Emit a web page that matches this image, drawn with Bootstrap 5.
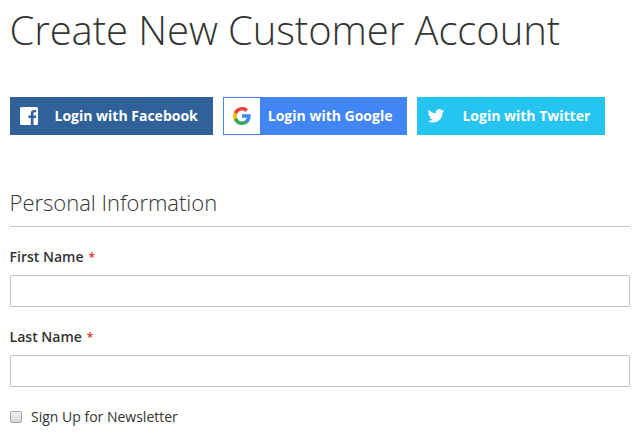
<!DOCTYPE html>
<html lang="en">
<head>
<meta charset="utf-8">
<meta name="viewport" content="width=device-width, initial-scale=1">
<title>Create New Customer Account</title>
<link href="https://cdn.jsdelivr.net/npm/bootstrap@5.3.0/dist/css/bootstrap.min.css" rel="stylesheet">
<style>
body { font-family: "Open Sans", "Noto Sans", sans-serif; font-size: 14px; line-height: 20px; color: #333; background: #fff; }
main { padding: 8px 10px 0; }
.page-title { font-size: 40px; line-height: 44px; font-weight: 300; letter-spacing: -.08px; margin: 0 0 45px -.5px; white-space: nowrap; }
.social-row { gap: 10px; }
.social-btn { --bs-btn-border-radius: 0; --bs-btn-padding-x: 0; --bs-btn-padding-y: 0; height: 38px; font-size: 14px; font-weight: 700; line-height: 36px; color: #fff; white-space: nowrap; }
.social-btn .logo { width: 37px; height: 36px; flex: none; }
.facebook { width: 203px; background: #306199; border-color: #306199; }
.facebook .caption { padding-left: 6.5px; }
.google { width: 184px; background: #4285f4; border-color: #4285f4; }
.google .logo { width: 36px; background: #fff; }
.google .caption { padding-left: 7.8px; }
.twitter { width: 188px; background: #26c4f1; border-color: #26c4f1; }
.twitter .caption { padding-left: 7.4px; }
.section-title { font-size: 22px; line-height: 30px; font-weight: 300; letter-spacing: -.02px; height: 40px; border-bottom: 1px solid #c6c6c6; margin: 52px 0 20px; text-indent: -.4px; }
.form-label { font-weight: 600; margin-bottom: 7px; display: block; text-indent: -.4px; }
.required { color: #e02b27; font-size: 12px; margin-left: 5px; }
.form-control { height: 32px; padding: 0 9px; border: 1px solid #c2c2c2; border-radius: 1px; font-size: 14px; }
.field { margin-bottom: 20px; }
.newsletter-box { appearance: none; width: 12px; height: 12px; margin: 0; border: 1px solid #a8a8a8; border-radius: 2px; background: linear-gradient(#eee, #dcdcdc); }
.news-label { margin-left: 9px; }
</style>
</head>
<body>
<main>
  <h1 class="page-title">Create New Customer Account</h1>
  <div class="d-flex social-row">
    <a class="btn social-btn facebook d-flex" href="#">
      <span class="logo"><svg class="d-block" width="37" height="36" viewBox="0 0 37 36"><path fill="#fff" d="M10.500 9h15q1.500 0 1.500 1.500v15q0 1.500-1.500 1.500H22.500v-7h2.400l.4-2.600h-2.800v-1.800c0-.8.3-1.300 1.400-1.300h1.300v-2.100c-3.400-.5-5.400.6-5.400 3.200v2h-2.400v2.600h2.400v7H10.500Q9 27 9 25.500v-15Q9 9 10.500 9z"/></svg></span>
      <span class="caption">Login with Facebook</span>
    </a>
    <a class="btn social-btn google d-flex" href="#">
      <span class="logo"><svg class="d-block" width="36" height="36" viewBox="-9 -9 36 36"><path fill="#4285f4" d="M17.640 9.200c0-.640-.060-1.250-.160-1.840H9v3.480h4.840a4.140 4.140 0 0 1-1.800 2.720v2.260h2.920c1.700-1.570 2.680-3.880 2.680-6.620z"/><path fill="#34a853" d="M9 18c2.430 0 4.470-.8 5.960-2.180l-2.920-2.260c-.8.540-1.840.86-3.040.86-2.340 0-4.330-1.580-5.040-3.710H.96v2.330A9 9 0 0 0 9 18z"/><path fill="#fbbc05" d="M3.960 10.710A5.400 5.400 0 0 1 3.680 9c0-.6.1-1.170.28-1.710V4.960H.96A9 9 0 0 0 0 9c0 1.450.35 2.830.96 4.040z"/><path fill="#ea4335" d="M9 3.580c1.320 0 2.500.45 3.440 1.350l2.580-2.590A9 9 0 0 0 .96 4.960l3 2.330C4.670 5.160 6.660 3.580 9 3.580z"/></svg></span>
      <span class="caption">Login with Google</span>
    </a>
    <a class="btn social-btn twitter d-flex" href="#">
      <span class="logo"><svg class="d-block" width="37" height="36" viewBox="0 0 37 36"><path fill="#fff" transform="translate(9.800 9.600) scale(.68)" d="M23.950 4.570a10 10 0 0 1-2.820.77 4.960 4.960 0 0 0 2.160-2.720c-.95.55-2 .96-3.130 1.180a4.920 4.920 0 0 0-8.380 4.480C7.690 8.100 4.070 6.130 1.640 3.160a4.920 4.920 0 0 0 1.520 6.570 4.900 4.900 0 0 1-2.230-.61v.06c0 2.380 1.700 4.370 3.950 4.820a5 5 0 0 1-2.210.09 4.940 4.940 0 0 0 4.600 3.420A9.870 9.870 0 0 1 0 19.540a13.990 13.990 0 0 0 7.550 2.210c9.050 0 14-7.500 14-13.990 0-.21 0-.42-.02-.63a9.940 9.940 0 0 0 2.460-2.550z"/></svg></span>
      <span class="caption">Login with Twitter</span>
    </a>
  </div>
  <form>
    <h2 class="section-title">Personal Information</h2>
    <div class="field">
      <label class="form-label" for="first">First Name<span class="required">*</span></label>
      <input class="form-control" id="first" type="text">
    </div>
    <div class="field">
      <label class="form-label" for="last">Last Name<span class="required">*</span></label>
      <input class="form-control" id="last" type="text">
    </div>
    <div class="d-flex align-items-center">
      <input class="newsletter-box" id="news" type="checkbox">
      <label class="news-label" for="news">Sign Up for Newsletter</label>
    </div>
  </form>
</main>
<script src="https://cdn.jsdelivr.net/npm/bootstrap@5.3.0/dist/js/bootstrap.bundle.min.js"></script>
</body>
</html>
